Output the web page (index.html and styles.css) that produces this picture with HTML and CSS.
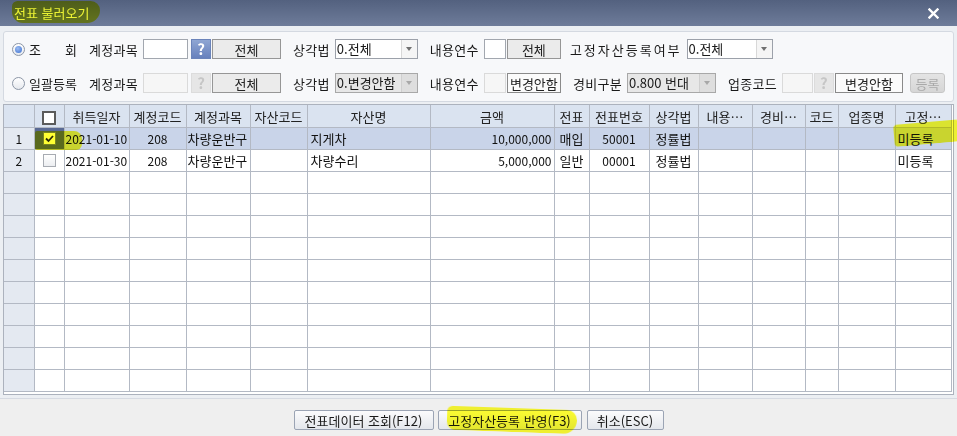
FILE: index.html
```html
<!DOCTYPE html>
<html lang="ko">
<head>
    <meta charset="UTF-8">
    <title>전표 불러오기</title>
    <link rel="stylesheet" href="styles.css">
</head>
<body>
    <div class="titlebar">
        <div class="title">전표 불러오기<i class="marker m-title"></i></div>
        <svg class="close" width="11" height="11" viewBox="0 0 11 11">
            <path d="M1.5 1.5 L9.5 9.5 M9.5 1.5 L1.5 9.5" stroke="#fff" stroke-width="2.4" stroke-linecap="square"/>
        </svg>
    </div>

    <div class="main">
        <!-- 조회 조건 -->
        <div class="panel">
            <div class="frow">
                <span class="radio on"></span>
                <span class="mode"><b>조</b><b>회</b></span>
                <span class="lbl">계정과목</span>
                <input class="in w45" type="text">
                <button class="q">?</button>
                <button class="btn w69">전체</button>
                <span class="lbl">상각법</span>
                <div class="sel w83"><span>0.전체</span><i></i></div>
                <span class="lbl">내용연수</span>
                <input class="in w22" type="text">
                <button class="btn w54">전체</button>
                <span class="lbl wide">고정자산등록여부</span>
                <div class="sel w86"><span>0.전체</span><i></i></div>
            </div>
            <div class="frow">
                <span class="radio"></span>
                <span class="mode">일괄등록</span>
                <span class="lbl">계정과목</span>
                <input class="in w45" type="text" disabled>
                <button class="q off">?</button>
                <button class="btn w69">전체</button>
                <span class="lbl">상각법</span>
                <div class="sel w83 off"><span>0.변경안함</span><i></i></div>
                <span class="lbl">내용연수</span>
                <input class="in w22" type="text" disabled>
                <button class="btn w54 light">변경안함</button>
                <span class="lbl">경비구분</span>
                <div class="sel w89 off"><span>0.800 번대</span><i></i></div>
                <span class="lbl">업종코드</span>
                <input class="in w31" type="text" disabled>
                <button class="q off tight">?</button>
                <button class="btn w68 light">변경안함</button>
                <button class="btn-reg">등록</button>
            </div>
        </div>

        <!-- 전표 목록 -->
        <div class="grid">
            <table>
                <colgroup>
                    <col class="c-no"><col class="c-chk"><col class="c-date"><col class="c-acode">
                    <col class="c-acct"><col class="c-scode"><col class="c-name"><col class="c-amt">
                    <col class="c-slip"><col class="c-slipno"><col class="c-dep"><col class="c-life">
                    <col class="c-exp"><col class="c-code"><col class="c-biz"><col class="c-reg">
                </colgroup>
                <thead>
                    <tr>
                        <th class="no"></th>
                        <th><span class="cb head"></span></th>
                        <th>취득일자</th>
                        <th>계정코드</th>
                        <th>계정과목</th>
                        <th>자산코드</th>
                        <th>자산명</th>
                        <th>금액</th>
                        <th>전표</th>
                        <th>전표번호</th>
                        <th>상각법</th>
                        <th>내용…</th>
                        <th>경비…</th>
                        <th>코드</th>
                        <th>업종명</th>
                        <th>고정…</th>
                    </tr>
                </thead>
                <tbody>
                    <tr class="sel-row">
                        <td class="no">1</td>
                        <td class="chk focus"><span class="cb on"><svg width="11" height="11" viewBox="0 0 11 11"><path d="M2 5.5 L4.5 8 L9 3" fill="none" stroke="#2b2b2b" stroke-width="1.8"/></svg></span><i class="marker m-chk"></i></td>
                        <td class="num">2021-01-10</td>
                        <td class="num c">208</td>
                        <td>차량운반구</td>
                        <td></td>
                        <td class="name">지게차</td>
                        <td class="num r">10,000,000</td>
                        <td class="c">매입</td>
                        <td class="num c">50001</td>
                        <td class="c">정률법</td>
                        <td></td><td></td><td></td><td></td>
                        <td class="reg">미등록<i class="marker m-reg"></i></td>
                    </tr>
                    <tr>
                        <td class="no">2</td>
                        <td class="chk"><span class="cb"></span></td>
                        <td class="num">2021-01-30</td>
                        <td class="num c">208</td>
                        <td>차량운반구</td>
                        <td></td>
                        <td class="name">차량수리</td>
                        <td class="num r">5,000,000</td>
                        <td class="c">일반</td>
                        <td class="num c">00001</td>
                        <td class="c">정률법</td>
                        <td></td><td></td><td></td><td></td>
                        <td class="reg">미등록</td>
                    </tr>
                    <tr><td class="no"></td><td></td><td></td><td></td><td></td><td></td><td></td><td></td><td></td><td></td><td></td><td></td><td></td><td></td><td></td><td></td></tr>
                    <tr><td class="no"></td><td></td><td></td><td></td><td></td><td></td><td></td><td></td><td></td><td></td><td></td><td></td><td></td><td></td><td></td><td></td></tr>
                    <tr><td class="no"></td><td></td><td></td><td></td><td></td><td></td><td></td><td></td><td></td><td></td><td></td><td></td><td></td><td></td><td></td><td></td></tr>
                    <tr><td class="no"></td><td></td><td></td><td></td><td></td><td></td><td></td><td></td><td></td><td></td><td></td><td></td><td></td><td></td><td></td><td></td></tr>
                    <tr><td class="no"></td><td></td><td></td><td></td><td></td><td></td><td></td><td></td><td></td><td></td><td></td><td></td><td></td><td></td><td></td><td></td></tr>
                    <tr><td class="no"></td><td></td><td></td><td></td><td></td><td></td><td></td><td></td><td></td><td></td><td></td><td></td><td></td><td></td><td></td><td></td></tr>
                    <tr><td class="no"></td><td></td><td></td><td></td><td></td><td></td><td></td><td></td><td></td><td></td><td></td><td></td><td></td><td></td><td></td><td></td></tr>
                    <tr><td class="no"></td><td></td><td></td><td></td><td></td><td></td><td></td><td></td><td></td><td></td><td></td><td></td><td></td><td></td><td></td><td></td></tr>
                    <tr><td class="no"></td><td></td><td></td><td></td><td></td><td></td><td></td><td></td><td></td><td></td><td></td><td></td><td></td><td></td><td></td><td></td></tr>
                    <tr><td class="no"></td><td></td><td></td><td></td><td></td><td></td><td></td><td></td><td></td><td></td><td></td><td></td><td></td><td></td><td></td><td></td></tr>
                </tbody>
            </table>
        </div>
    </div>

    <div class="footer">
        <button class="fbtn w140">전표데이터 조회(F12)</button>
        <button class="fbtn w144">고정자산등록 반영(F3)<i class="marker m-btn"></i></button>
        <button class="fbtn w77">취소(ESC)</button>
    </div>
</body>
</html>
```

FILE: styles.css
```css
body{
    margin:0;
    width:957px;
    height:436px;
    overflow:hidden;
    font-family: "Noto Sans CJK KR", "Liberation Sans", sans-serif;
    font-size:13px;
    color:#1a1a1a;
    background:#eceff3;
}
button, input{
    font: inherit;
    color: inherit;
    margin:0;
    padding:0;
    box-sizing:border-box;
}

/* 형광펜 표시 */
.marker{
    position:absolute;
    background:#ffff00;
    mix-blend-mode: multiply;
    opacity:.8;
    pointer-events:none;
}
.m-title{ left:-2px; top:1px; width:88px; height:22px; border-radius:6px 10px 14px 12px; background:#e8f000; }
.m-chk{ left:0; top:3px; width:47px; height:19px; border-radius:2px 8px 6px 2px; }
.m-reg{ left:-1px; top:-3px; width:66px; height:22px; border-radius:4px; transform: rotate(-5deg); transform-origin:left bottom; }
.m-btn{ left:8px; top:-3px; width:130px; height:24px; border-radius:6px 12px 16px 10px; transform: rotate(2deg); }

/* 타이틀 */
.titlebar{
    height:26px;
    display:flex;
    justify-content:space-between;
    align-items:center;
    background: linear-gradient(#53617f, #6e7c9a);
    color:#fff;
}
.title{
    position:relative;
    margin-left:14px;
    line-height:26px;
}
.close{ margin-right:18px; }

.main{ padding:5px 3px 3px; }

/* 조회 조건 */
.panel{
    height:71px;
    box-sizing:border-box;
    padding-top:7px;
    border:1px solid #d4d9e1;
    border-radius:3px;
    background:#f7f8fa;
}
.frow{
    display:flex;
    align-items:center;
    height:20px;
}
.frow + .frow{ margin-top:14px; }
.radio{
    position:relative;
    width:13px;
    height:13px;
    margin-left:8px;
    box-sizing:border-box;
    border:1px solid #8c96a6;
    border-radius:50%;
    background: linear-gradient(#fff, #e6e9ee);
}
.radio.on::after{
    content:"";
    position:absolute;
    inset:2px;
    border-radius:50%;
    background: radial-gradient(circle at 40% 35%, #9dbdf2, #3b6fcf);
}
.mode{
    width:48px;
    margin-left:4px;
    display:flex;
    justify-content:space-between;
    white-space:nowrap;
}
.mode b{ font-weight:normal; }
.lbl{
    margin:0 5px 0 12px;
    letter-spacing:.3px;
    white-space:nowrap;
}
.lbl.wide{ letter-spacing:2px; margin-left:9px; }
.in{
    height:20px;
    border:1px solid #a2a7af;
    background:#fff;
}
.in:disabled{ border-color:#dadada; background:#f6f6f6; }
.w22{ width:22px; }
.w31{ width:31px; }
.w45{ width:45px; }
.q{
    width:20px;
    height:20px;
    margin:0 1px 0 3px;
    border:1px solid #6b84ba;
    background: linear-gradient(#8fa6d3, #6781bd);
    color:#fff;
    font-weight:bold;
    font-size:15px;
    line-height:18px;
}
.q.off{
    border-color:#dcdcdc;
    background:#e6e6e6;
    color:#c6c6c6;
}
.q.tight{ margin-left:1px; }
.btn{
    height:20px;
    margin-left:0;
    border:1px solid #969696;
    background:#ebebeb;
    color:#222;
}
.in + .btn{ margin-left:1px; }
.btn.light{ background:#fbfbfb; border-color:#8a8a8a; }
.w54{ width:54px; }
.w68{ width:68px; }
.w69{ width:69px; }
.sel{
    display:flex;
    height:20px;
    box-sizing:border-box;
    border:1px solid #9ca1aa;
    background:#fff;
}
.sel span{
    flex:1;
    padding-left:1px;
    line-height:17px;
    white-space:nowrap;
    overflow:hidden;
}
.sel i{
    width:15px;
    display:flex;
    align-items:center;
    justify-content:center;
    border-left:1px solid #d8d8d8;
    background:#f5f5f5;
}
.sel i::after{
    content:"";
    border-left:3px solid transparent;
    border-right:3px solid transparent;
    border-top:4px solid #707070;
}
.sel.off{ background:#e7e7e7; border-color:#a8a8a8; }
.sel.off i{ background:#dedede; border-left-color:#cfcfcf; }
.sel.off i::after{ border-top-color:#a8a8a8; }
.w83{ width:83px; }
.w86{ width:86px; }
.w89{ width:89px; }
.btn-reg{
    width:35px;
    height:20px;
    margin-left:7px;
    border:1px solid #c6c6c6;
    border-radius:3px;
    background: linear-gradient(#e4e4e4, #d6d6d6);
    color:#a9a9a9;
}

/* 그리드 */
.grid{
    margin-top:2px;
    padding:0 2px 2px 0;
    border:1px solid #acb2bd;
    background:#fff;
}
table{
    width:947px;
    table-layout:fixed;
    border-collapse:collapse;
}
.c-no{ width:30px; }
.c-chk{ width:30px; }
.c-date{ width:65px; }
.c-acode{ width:57px; }
.c-acct{ width:64px; }
.c-scode{ width:57px; }
.c-name{ width:123px; }
.c-amt{ width:124px; }
.c-slip{ width:35px; }
.c-slipno{ width:60px; }
.c-dep{ width:49px; }
.c-life{ width:54px; }
.c-exp{ width:53px; }
.c-code{ width:33px; }
.c-biz{ width:57px; }
.c-reg{ width:56px; }
th, td{
    padding:0;
    border:1px solid #b3b9c4;
    white-space:nowrap;
    overflow:visible;
}
th:first-child, td:first-child{ border-left:none; }
th{
    height:22px;
    border-top:none;
    background:#dae3f0;
    font-weight:normal;
    color:#222;
    text-align:center;
}
td{
    height:21px;
    line-height:20px;
    padding-left:1px;
    color:#111;
}
td.num{ font-size:12px; }
td.no{
    background:#e4e9f1;
    text-align:center;
    padding:0;
    font-size:12px;
}
tr.sel-row td{ background:#c9d4e9; }
tr.sel-row td.no{ background:#e4e9f1; }
td.c{ text-align:center; padding:0; }
td.r{ text-align:right; padding:0 2px 0 0; }
td.name{ padding-left:3px; }
td.reg{ position:relative; padding-left:2px; }
td.chk{
    position:relative;
    text-align:center;
    padding:0;
    line-height:0;
}
tr.sel-row td.focus{ background:#5a6a94; }
.cb{
    display:inline-block;
    width:13px;
    height:13px;
    box-sizing:border-box;
    border:1px solid #a7abb2;
    background: linear-gradient(#fff, #eceef1);
    vertical-align:middle;
}
.cb.head{
    width:14px;
    height:14px;
    border:2px solid #5b5b5b;
    background:#fff;
}
.cb.on{
    border-color:#7a8496;
    background:#fff;
}
.cb.on svg{ display:block; margin:0; }

/* 하단 버튼 */
.footer{
    height:38px;
    box-sizing:border-box;
    padding-top:11px;
    border-top:1px solid #d6dae2;
    background:#efefef;
    display:flex;
    justify-content:center;
    gap:4px;
}
.fbtn{
    position:relative;
    height:20px;
    border:1px solid #9ba4b4;
    border-radius:2px;
    background: linear-gradient(#fbfbfc, #e4e7ec);
    color:#1a1a1a;
}
.w140{ width:140px; }
.w144{ width:144px; margin-right:1px; }
.w77{ width:77px; }
```
